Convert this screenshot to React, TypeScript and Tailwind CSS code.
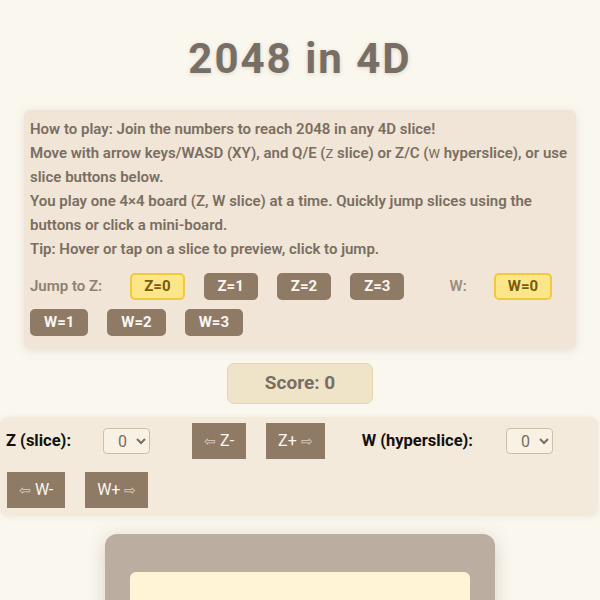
import React from "react";

const zSlices = [0, 1, 2, 3];
const wSlices = [0, 1, 2, 3];

function JumpButton({ label, active }: { label: string; active: boolean }) {
  return (
    <button
      className={
        active
          ? "h-[27px] rounded-[5px] border-2 border-[#f1c93b] bg-[#fde68a] px-[12px] text-[15px] font-bold leading-[19px] text-[#7a5a10]"
          : "h-[27px] rounded-[5px] border-2 border-[#8f7a66] bg-[#8f7a66] px-[12px] text-[15px] font-bold leading-[19px] text-[#f9f6f2]"
      }
    >
      {label}
    </button>
  );
}

function StepButton({ children }: { children: React.ReactNode }) {
  return (
    <button className="flex h-[36px] items-center gap-[4px] bg-[#8f7a66] px-[12px] text-[16px] text-[#f9f6f2]">
      {children}
    </button>
  );
}

function Arrow({ dir }: { dir: "left" | "right" }) {
  return (
    <span className="text-[14px] text-[#d9cfc4]">{dir === "left" ? "⇦" : "⇨"}</span>
  );
}

function SliceSelect() {
  return (
    <select
      defaultValue="0"
      className="h-[26px] w-[47px] rounded-[4px] border border-[#cbbfa8] bg-[#f8f1e4] pl-[10px] text-[16px] text-[#776e65]"
    >
      <option value="0">0</option>
      <option value="1">1</option>
      <option value="2">2</option>
      <option value="3">3</option>
    </select>
  );
}

export default function App() {
  return (
    <div className="min-h-screen bg-[#faf7ef] font-['Roboto',sans-serif] text-[#776e65]">
      <h1 className="pt-[35px] pb-[27px] text-center text-[42px] font-bold leading-[48px] tracking-[2px] text-[#776e65] [text-shadow:0_1px_4px_rgba(170,150,120,0.35)]">
        2048 in 4D
      </h1>

      <div className="mx-[24px] rounded-[6px] bg-[#f0e5d6] px-[6px] pt-[7px] pb-[13px] shadow-[0_2px_10px_rgba(150,130,100,0.18)]">
        <div className="text-[15px] font-semibold leading-[24px] text-[#7a6e62]">
          <p>How to play: Join the numbers to reach 2048 in any 4D slice!</p>
          <p>
            Move with arrow keys/WASD (XY), and Q/E (
            <span className="font-normal [font-variant:small-caps]">z</span> slice) or Z/C (
            <span className="font-normal [font-variant:small-caps]">w</span> hyperslice), or use
            slice buttons below.
          </p>
          <p>
            You play one 4×4 board (Z, W slice) at a time. Quickly jump slices using the
            buttons or click a mini-board.
          </p>
          <p>Tip: Hover or tap on a slice to preview, click to jump.</p>
        </div>

        <div className="mt-[12px] flex flex-wrap items-center gap-x-[19px] gap-y-[9px]">
          <span className="mr-[9px] text-[15px] font-semibold text-[#8f8072]">Jump to Z:</span>
          {zSlices.map((z) => (
            <JumpButton key={`z${z}`} label={`Z=${z}`} active={z === 0} />
          ))}
          <span className="ml-[26px] mr-[8px] text-[15px] font-semibold text-[#9a8d80]">W:</span>
          {wSlices.map((w) => (
            <JumpButton key={`w${w}`} label={`W=${w}`} active={w === 0} />
          ))}
        </div>
      </div>

      <div className="mt-[14px] flex justify-center">
        <div className="flex h-[41px] w-[146px] items-center justify-center rounded-[7px] border border-[#e3d4b4] bg-[#efe3c8] text-[19px] font-bold text-[#776e65]">
          Score: 0
        </div>
      </div>

      <div className="mt-[13px] mr-[2px] rounded-[8px] bg-[#f3eadb] px-[6px] pt-[6px] pb-[8px] shadow-[0_1px_6px_rgba(150,130,100,0.12)]">
        <div className="flex flex-wrap items-center gap-x-[20px] gap-y-[13px]">
          <span className="mr-[12px] text-[16.5px] font-bold text-[#111]">Z (slice):</span>
          <SliceSelect />
          <span className="ml-[22px]">
            <StepButton>
              <Arrow dir="left" /> Z-
            </StepButton>
          </span>
          <StepButton>
            Z+ <Arrow dir="right" />
          </StepButton>
          <span className="ml-[17px] mr-[13px] text-[16.5px] font-bold text-[#111]">W (hyperslice):</span>
          <SliceSelect />
          <span className="ml-[1px]">
            <StepButton>
              <Arrow dir="left" /> W-
            </StepButton>
          </span>
          <StepButton>
            W+ <Arrow dir="right" />
          </StepButton>
        </div>
      </div>

      <div className="mt-[18px] flex justify-center pb-[40px]">
        <div className="w-[390px] rounded-[12px] bg-[#bbada0] px-[25px] pt-[38px] pb-[25px] shadow-[0_4px_18px_rgba(120,100,80,0.25)]">
          <div className="grid h-[340px] grid-cols-4 gap-[10px] rounded-[6px] bg-[#fff4d5] p-[10px]">
            {Array.from({ length: 16 }).map((_, i) => (
              <div key={i} className="rounded-[4px] bg-[#fff4d5]" />
            ))}
          </div>
        </div>
      </div>
    </div>
  );
}
